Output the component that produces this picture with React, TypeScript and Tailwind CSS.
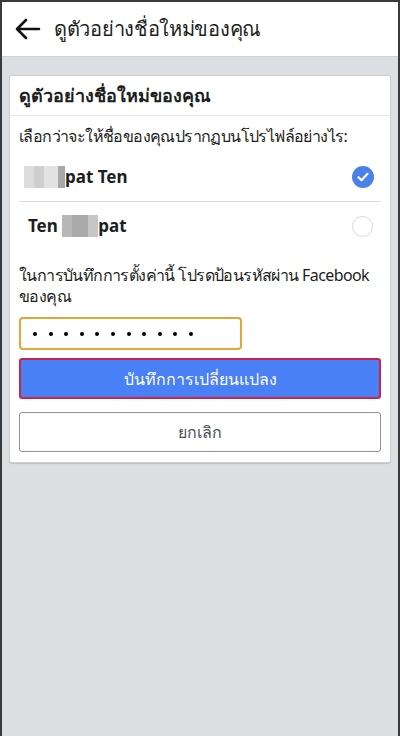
import React from "react";

const font = { fontFamily: "'Noto Sans', 'Liberation Sans', sans-serif" };

function BlurBlock({ cells }: { cells: string[] }) {
  return (
    <span className="inline-flex h-[22px] items-stretch align-middle">
      {cells.map((c, i) => (
        <span key={i} className={c} />
      ))}
    </span>
  );
}

export default function App() {
  return (
    <div
      className="w-[400px] h-[736px] bg-[#dcdfe2] border-l-2 border-t-2 border-r-2 border-[#3a3a3a] flex flex-col text-[#1c1e21]"
      style={font}
    >
      {/* Header */}
      <div className="h-[55px] bg-white flex items-center border-b border-[#cfd2d6] shrink-0">
        <svg width="26" height="22" viewBox="0 0 26 22" className="ml-[13px]" fill="none" stroke="#111" strokeWidth="2.6" strokeLinecap="round" strokeLinejoin="round">
          <path d="M24 11H3M11 2L2 11l9 9" />
        </svg>
        <span className="ml-[13px] text-[20px] tracking-[-0.3px] text-[#1c1e21] leading-none">ดูตัวอย่างชื่อใหม่ของคุณ</span>
      </div>

      {/* Card */}
      <div className="mx-[7px] mt-[18px] bg-white rounded-[3px] border border-[#ced0d4] shadow-[0_1px_1px_rgba(0,0,0,0.15)]">
        <div className="h-[40px] flex items-center px-[9px] border-b border-[#e4e6e9]">
          <span className="text-[18px] font-bold">ดูตัวอย่างชื่อใหม่ของคุณ</span>
        </div>
        <div className="px-[9px]">
          <p className="text-[16px] tracking-[-0.6px] mt-[9px] leading-[22px]">เลือกว่าจะให้ชื่อของคุณปรากฏบนโปรไฟล์อย่างไร:</p>

          <div className="h-[50px] mt-[5px] flex items-center justify-between border-b border-[#dadde1]">
            <span className="flex items-center text-[17px] font-bold pl-[5px]">
              <BlurBlock
                cells={[
                  "w-[10px] bg-[#dcdcdc]",
                  "w-[10px] bg-[#cfcfcf]",
                  "w-[14px] bg-[#e2e2e2]",
                  "w-[7px] bg-[#a8a8a8]",
                ]}
              />
              <span>pat Ten</span>
            </span>
            <span className="w-[22px] h-[22px] rounded-full bg-[#4a80e8] flex items-center justify-center mr-[7px]">
              <svg width="12" height="10" viewBox="0 0 12 10" fill="none" stroke="white" strokeWidth="2.2" strokeLinecap="round" strokeLinejoin="round">
                <path d="M1.5 5.2l3 3L10.5 1.8" />
              </svg>
            </span>
          </div>

          <div className="h-[48px] flex items-center justify-between">
            <span className="flex items-center text-[17px] font-bold pl-[9px]">
              <span>Ten&nbsp;</span>
              <BlurBlock
                cells={[
                  "w-[10px] bg-[#b8b8b8]",
                  "w-[16px] bg-[#aaaaaa]",
                  "w-[10px] bg-[#c6c6c6]",
                ]}
              />
              <span>pat</span>
            </span>
            <span className="w-[21px] h-[21px] rounded-full border border-[#d4d6da] mr-[8px]" />
          </div>

          <p className="text-[16px] tracking-[-0.6px] leading-[21px] mt-[15px]">
            ในการบันทึกการตั้งค่านี้ โปรดป้อนรหัสผ่าน Facebook ของคุณ
          </p>

          <div className="mt-[10px] w-[223px] h-[33px] rounded-[4px] border-2 border-[#e2a63a] flex items-center pl-[12px] gap-[11.6px]">
            {Array.from({ length: 11 }).map((_, i) => (
              <span key={i} className="w-[4px] h-[4px] rounded-full bg-black" />
            ))}
          </div>

          <button className="mt-[8px] w-full h-[41px] rounded-[3px] bg-[#4a80f5] border-2 border-[#cc2244] text-white text-[16px]">
            บันทึกการเปลี่ยนแปลง
          </button>

          <button className="mt-[13px] mb-[10px] w-full h-[40px] rounded-[3px] bg-white border border-[#8d949e] text-[#4b4f56] text-[16px]">
            ยกเลิก
          </button>
        </div>
      </div>
    </div>
  );
}
